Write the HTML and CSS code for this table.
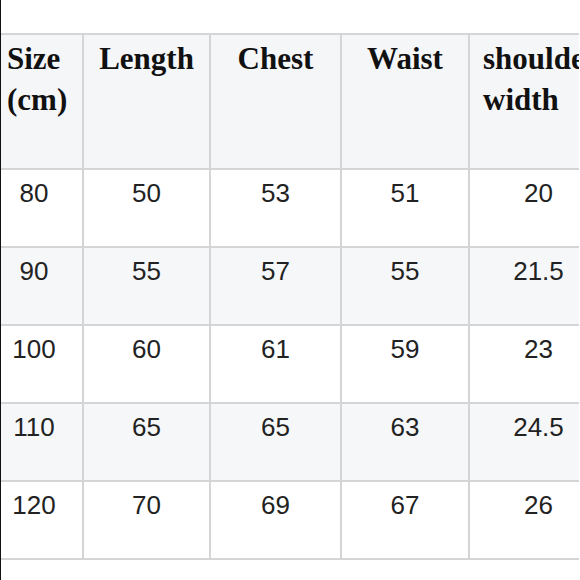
FILE: index.html
```html
<!DOCTYPE html>
<html>
<head>
<meta charset="utf-8">
<link rel="stylesheet" href="styles.css">
</head>
<body>
<div class="frame">
  <table class="size-table">
    <colgroup>
      <col class="c1"><col class="c2"><col class="c3"><col class="c4"><col class="c5">
    </colgroup>
    <thead>
      <tr>
        <th class="first">Size<br>(cm)</th>
        <th>Length</th>
        <th>Chest</th>
        <th>Waist</th>
        <th class="last">shoulder<br>width</th>
      </tr>
    </thead>
    <tbody>
      <tr><td class="first">80</td><td>50</td><td>53</td><td>51</td><td>20</td></tr>
      <tr class="alt"><td class="first">90</td><td>55</td><td>57</td><td>55</td><td>21.5</td></tr>
      <tr><td class="first">100</td><td>60</td><td>61</td><td>59</td><td>23</td></tr>
      <tr class="alt"><td class="first">110</td><td>65</td><td>65</td><td>63</td><td>24.5</td></tr>
      <tr><td class="first">120</td><td>70</td><td>69</td><td>67</td><td>26</td></tr>
    </tbody>
  </table>
</div>
</body>
</html>
```
FILE: styles.css
```css
html, body {
  margin: 0;
  padding: 0;
  overflow: hidden;
  background: #fff;
}
.frame {
  width: 579px;
  height: 580px;
  border-left: 1px solid #111;
  overflow: hidden;
  padding-top: 33px;
  box-sizing: border-box;
}
.size-table {
  border-collapse: collapse;
  table-layout: fixed;
  width: 606px;
}
.c1 { width: 82px; }
.c2 { width: 127px; }
.c3 { width: 131px; }
.c4 { width: 128px; }
.c5 { width: 138px; }
.size-table th,
.size-table td {
  border: 2px solid #d4d5d7;
  vertical-align: top;
}
.size-table tr > :first-child { border-left: none; }
.size-table tr > :last-child { border-right: none; }
.size-table th {
  background: #f5f6f8;
  font-family: "Liberation Serif", "Times New Roman", serif;
  font-weight: bold;
  font-size: 31px;
  line-height: 41px;
  color: #111;
  text-align: center;
  height: 135px;
  padding: 3px 4px 0;
  box-sizing: border-box;
}
.size-table th.first {
  text-align: left;
  padding-left: 6px;
}
.size-table th.last {
  text-align: left;
  padding-left: 13px;
  white-space: nowrap;
}
.size-table td {
  font-family: "Liberation Sans", Arial, sans-serif;
  font-size: 26px;
  color: #222;
  text-align: center;
  height: 78px;
  padding: 8px 4px 0;
  box-sizing: border-box;
}
.size-table td.first {
  padding-right: 19px;
}
.size-table tr.alt td {
  background: #f6f7f9;
}
```
